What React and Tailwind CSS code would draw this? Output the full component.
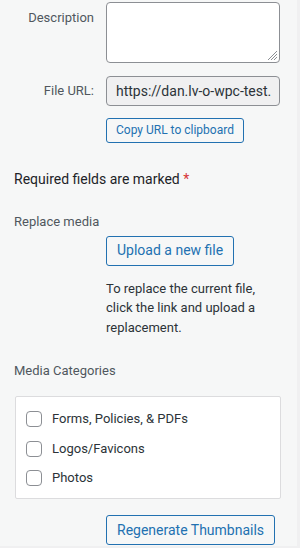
import { useState } from "react";

/* ================= CONFIG ================= */

const CATEGORIES = ["Forms, Policies, & PDFs", "Logos/Favicons", "Photos"];

const FONT = {
  fontFamily: "Roboto, 'Noto Sans', 'Liberation Sans', sans-serif",
};

/* ================= COMPONENT ================= */

export default function App() {
  const [checked, setChecked] = useState({});

  return (
    <div
      style={FONT}
      className="w-[300px] h-[548px] overflow-hidden bg-[#f0f0f1] flex"
    >
      <main className="w-[297px] h-[546px] bg-[#f6f7f7] pt-[2px]">

        {/* ===== DESCRIPTION ===== */}
        <div className="flex">
          <label className="w-[94px] text-right text-[13px] text-[#50575e] pt-[6px] leading-5">
            Description
          </label>
          <div className="relative ml-3 w-[174px] h-[61px] rounded border border-[#8c8f94] bg-white">
            <ResizeGrip />
          </div>
        </div>

        {/* ===== FILE URL ===== */}
        <div className="flex items-center mt-[13px]">
          <label className="w-[94px] text-right text-[13px] text-[#50575e]">
            File URL:
          </label>
          <div className="ml-3 w-[174px] h-[30px] rounded border border-[#8c8f94] bg-[#f0f0f1] px-[9px] flex items-center overflow-hidden whitespace-nowrap text-[14px] text-[#2c3338]">
            https://dan.lv-o-wpc-test.
          </div>
        </div>

        <div className="ml-[106px] mt-[11px]">
          <Button small>Copy URL to clipboard</Button>
        </div>

        {/* ===== REQUIRED ===== */}
        <p className="ml-[14px] mt-[26px] text-[14px] leading-5 text-[#1d2327]">
          Required fields are marked <span className="text-[#d63638]">*</span>
        </p>

        {/* ===== REPLACE MEDIA ===== */}
        <p className="ml-[14px] mt-[23px] text-[13px] leading-5 text-[#50575e]">
          Replace media
        </p>

        <div className="ml-[106px] mt-[4px]">
          <Button>Upload a new file</Button>
        </div>

        <p className="ml-[106px] mt-[13px] w-[175px] text-[13px] leading-[19.5px] text-[#2c3338]">
          To replace the current file, click the link and upload a
          replacement.
        </p>

        {/* ===== MEDIA CATEGORIES ===== */}
        <p className="ml-[14px] mt-[24px] text-[13px] leading-5 text-[#50575e]">
          Media Categories
        </p>

        <div className="ml-[15px] mt-[15px] w-[266px] h-[103px] bg-white border border-[#dcdcde] rounded-[2px] pt-[14px] px-[10px] flex flex-col gap-[13.5px]">
          {CATEGORIES.map((c) => (
            <label key={c} className="flex items-center gap-[10px] h-4 text-[13px] text-[#2c3338]">
              <input
                type="checkbox"
                checked={!!checked[c]}
                onChange={() => setChecked((p) => ({ ...p, [c]: !p[c] }))}
                className="appearance-none w-4 h-4 rounded-[4px] border border-[#8c8f94] bg-white"
              />
              {c}
            </label>
          ))}
        </div>

        <div className="ml-[106px] mt-[16px]">
          <Button>Regenerate Thumbnails</Button>
        </div>
      </main>
    </div>
  );
}

/* ================= UI HELPERS ================= */

function Button({ children, small }) {
  return (
    <button
      className={`
        rounded-[3px] border border-[#2271b1] bg-[#f6f7f7] text-[#2271b1]
        whitespace-nowrap
        ${small ? "h-[25px] px-[9px] text-[12px]" : "h-[30px] px-[10px] text-[14px]"}
      `}
    >
      {children}
    </button>
  );
}

function ResizeGrip() {
  return (
    <svg
      className="absolute right-[1px] bottom-[1px]"
      width="12"
      height="12"
      viewBox="0 0 12 12"
    >
      <path
        d="M11 2 L2 11 M11 5 L5 11 M11 8 L8 11"
        stroke="#8c8f94"
        strokeWidth="1"
        fill="none"
      />
    </svg>
  );
}
